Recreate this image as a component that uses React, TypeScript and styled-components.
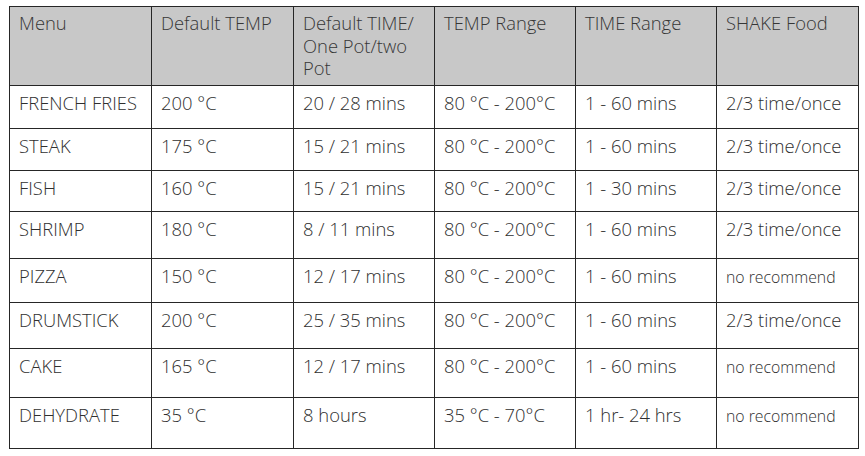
import styled, { createGlobalStyle } from "styled-components";

interface Preset {
  menu: string;
  temp: string;
  time: string;
  tempRange: string;
  timeRange: string;
  shake: string;
  height: number;
}

const presets: Preset[] = [
  { menu: "FRENCH FRIES", temp: "200 °C", time: "20 / 28 mins", tempRange: "80 °C - 200°C", timeRange: "1 - 60 mins", shake: "2/3 time/once", height: 43 },
  { menu: "STEAK", temp: "175 °C", time: "15 / 21 mins", tempRange: "80 °C - 200°C", timeRange: "1 - 60 mins", shake: "2/3 time/once", height: 42 },
  { menu: "FISH", temp: "160 °C", time: "15 / 21 mins", tempRange: "80 °C - 200°C", timeRange: "1 - 30 mins", shake: "2/3 time/once", height: 41 },
  { menu: "SHRIMP", temp: "180 °C", time: "8 / 11 mins", tempRange: "80 °C - 200°C", timeRange: "1 - 60 mins", shake: "2/3 time/once", height: 47 },
  { menu: "PIZZA", temp: "150 °C", time: "12 / 17 mins", tempRange: "80 °C - 200°C", timeRange: "1 - 60 mins", shake: "no recommend", height: 44 },
  { menu: "DRUMSTICK", temp: "200 °C", time: "25 / 35 mins", tempRange: "80 °C - 200°C", timeRange: "1 - 60 mins", shake: "2/3 time/once", height: 46 },
  { menu: "CAKE", temp: "165 °C", time: "12 / 17 mins", tempRange: "80 °C - 200°C", timeRange: "1 - 60 mins", shake: "no recommend", height: 49 },
  { menu: "DEHYDRATE", temp: "35 °C", time: "8 hours", tempRange: "35 °C - 70°C", timeRange: "1 hr- 24 hrs", shake: "no recommend", height: 51 },
];

const headers = [
  "Menu",
  "Default TEMP",
  "Default TIME/ One Pot/two Pot",
  "TEMP Range",
  "TIME Range",
  "SHAKE Food",
];

const GlobalStyle = createGlobalStyle`
  html, body {
    margin: 0;
    padding: 0;
    background: #fff;
  }
  body {
    font-family: "Open Sans", "Noto Sans", sans-serif;
    color: #333;
  }
`;

const Page = styled.div`
  padding: 6px 0 0 9px;
`;

const Table = styled.table`
  border-collapse: collapse;
  table-layout: fixed;
  width: 849px;
`;

const Col = styled.col<{ $w: number }>`
  width: ${(p) => p.$w}px;
`;

const HeadRow = styled.tr`
  height: 79px;
  background: #c8c8c8;
`;

const HeadCell = styled.th`
  border: 1px solid #262626;
  padding: 5px 9px 0 9px;
  vertical-align: top;
  text-align: left;
  font-weight: 350;
  font-size: 18.4px;
  line-height: 22.5px;
  color: #363636;
`;

const Row = styled.tr<{ $h: number }>`
  height: ${(p) => p.$h}px;
`;

const Cell = styled.td<{ $small?: boolean }>`
  border: 1px solid #262626;
  padding: ${(p) => (p.$small ? "7px 9px 0 9px" : "6px 9px 0 9px")};
  vertical-align: top;
  font-weight: 350;
  font-size: ${(p) => (p.$small ? "15.8px" : "18.4px")};
  line-height: 22.5px;
  color: #2f2f2f;
  white-space: nowrap;
`;

const widths = [142, 142, 141, 141, 141, 142];

export default function App() {
  return (
    <Page>
      <GlobalStyle />
      <Table>
        <colgroup>
          {widths.map((w, i) => (
            <Col key={i} $w={w} />
          ))}
        </colgroup>
        <thead>
          <HeadRow>
            {headers.map((h) => (
              <HeadCell key={h}>{h}</HeadCell>
            ))}
          </HeadRow>
        </thead>
        <tbody>
          {presets.map((p) => (
            <Row key={p.menu} $h={p.height}>
              <Cell>{p.menu}</Cell>
              <Cell>{p.temp}</Cell>
              <Cell>{p.time}</Cell>
              <Cell>{p.tempRange}</Cell>
              <Cell>{p.timeRange}</Cell>
              <Cell $small={p.shake === "no recommend"}>{p.shake}</Cell>
            </Row>
          ))}
        </tbody>
      </Table>
    </Page>
  );
}
